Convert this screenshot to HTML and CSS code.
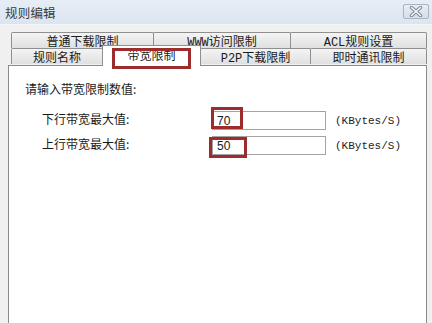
FILE: index.html
```html
<!DOCTYPE html>
<html lang="zh-CN">

<head>
  <meta charset="UTF-8">
  <title>规则编辑</title>
  <link rel="stylesheet" href="styles.css">
</head>

<body>
  <div class="win">
    <div class="titlebar">
      <span class="title">规则编辑</span>
      <span class="close">
        <svg width="18" height="11" viewBox="0 0 18 11">
          <path d="M4.5 1.5 L13.5 9.5 M13.5 1.5 L4.5 9.5" stroke="#7b8798" stroke-width="3.6" stroke-linecap="round" />
          <path d="M4.5 1.5 L13.5 9.5 M13.5 1.5 L4.5 9.5" stroke="#f6f8fb" stroke-width="1.6" stroke-linecap="round" fill="none" />
        </svg>
      </span>
    </div>

    <div class="body">
      <!-- 选项卡 -->
      <div class="tabs">
        <div class="tab-row">
          <div class="tab w142">普通下载限制</div>
          <div class="tab w137">WWW访问限制</div>
          <div class="tab w136">ACL规则设置</div>
        </div>
        <div class="tab-row">
          <div class="tab w91">规则名称</div>
          <div class="tab active w98"><span class="hl">带宽限制</span></div>
          <div class="tab w110">P2P下载限制</div>
          <div class="tab w116">即时通讯限制</div>
        </div>
      </div>

      <!-- 内容面板 -->
      <div class="panel">
        <div class="prompt">请输入带宽限制数值:</div>
        <div class="fields">
          <label>下行带宽最大值:</label>
          <div class="box"><span class="val">70</span><i class="mark m1"></i></div>
          <span class="unit">(KBytes/S)</span>

          <label>上行带宽最大值:</label>
          <div class="box"><span class="val">50</span><i class="mark m2"></i></div>
          <span class="unit">(KBytes/S)</span>
        </div>
      </div>
    </div>
  </div>
</body>

</html>
```

FILE: styles.css
```css
* {
  margin: 0;
  padding: 0;
  box-sizing: border-box;
}

body {
  width: 432px;
  height: 323px;
  overflow: hidden;
  font-family: "Liberation Mono", "Noto Sans CJK SC", monospace;
  font-size: 12px;
  color: #1a1a1a;
  background: #eeeeee;
}

.win {
  height: 323px;
  display: flex;
  flex-direction: column;
}

/* 标题栏 */
.titlebar {
  height: 25px;
  display: flex;
  align-items: center;
  justify-content: space-between;
  padding: 0 3px 0 5px;
  background: linear-gradient(to bottom, #e6edf5, #dbe5f0);
  border-bottom: 1px solid #f4f6f9;
}

.title {
  font-family: "Noto Sans CJK SC", sans-serif;
  font-size: 12.5px;
  color: #3a3a3a;
  letter-spacing: 0.2px;
}

.close {
  width: 26px;
  height: 15px;
  display: flex;
  align-items: center;
  justify-content: center;
  border: 1px solid #a9b4c2;
  border-radius: 2px;
  background: linear-gradient(to bottom, #e9eef4, #d6dee8);
  margin-top: -2px;
}

.body {
  flex: 1;
  display: flex;
  flex-direction: column;
  padding: 7px 5px 0 8px;
  background: #f0f0f0;
}

/* 选项卡 */
.tabs {
  margin-left: 3px;
}

.tab-row {
  display: flex;
  height: 16px;
}

.tab {
  height: 16px;
  display: flex;
  align-items: center;
  justify-content: center;
  border: 1px solid #8f8f8f;
  border-bottom: none;
  border-radius: 2px 2px 0 0;
  background: linear-gradient(to bottom, #f4f4f4, #e0e0e0);
  margin-right: -1px;
  padding-top: 1px;
}

.w142 { width: 143px; }
.w137 { width: 138px; }
.w136 { width: 137px; }
.w91 { width: 92px; }
.w98 { width: 99px; }
.w110 { width: 111px; }
.w116 { width: 117px; }

.tab.active {
  position: relative;
  z-index: 1;
  height: 21px;
  margin-top: -3px;
  margin-bottom: -2px;
  background: #ffffff;
  align-items: flex-start;
  padding-top: 5px;
}

.hl {
  display: inline-block;
  padding: 0 12px 2px;
  line-height: 13px;
  outline: 3px solid #9d2d2d;
  height: 15px;
}

/* 内容面板 */
.panel {
  flex: 1;
  background: #ffffff;
  border: 1px solid #8a8a8a;
  border-bottom: none;
  margin-top: 1px;
  font-family: "Noto Sans CJK SC", sans-serif;
}

.prompt {
  margin: 15px 0 0 16px;
  line-height: 16px;
}

.fields {
  display: grid;
  grid-template-columns: 170px 114px auto;
  row-gap: 6px;
  align-items: center;
  padding-left: 33px;
  margin-top: 14px;
}

.fields label {
  line-height: 16px;
  margin-top: -3px;
}

.box {
  position: relative;
  height: 19px;
  border: 1px solid #a3a3a3;
  display: flex;
  align-items: center;
  padding-left: 4px;
}

.val {
  font-family: "Liberation Sans", sans-serif;
  font-size: 12px;
}

/* 红色标注框 */
.mark {
  position: absolute;
  border: 3px solid #9d2d2d;
}

.m1 {
  left: -2px;
  top: -5px;
  width: 32px;
  height: 22px;
}

.m2 {
  left: -4px;
  top: 0;
  width: 38px;
  height: 21px;
}

.unit {
  font-family: "Liberation Mono", monospace;
  font-size: 11px;
  margin-left: 9px;
  color: #222;
}
```
